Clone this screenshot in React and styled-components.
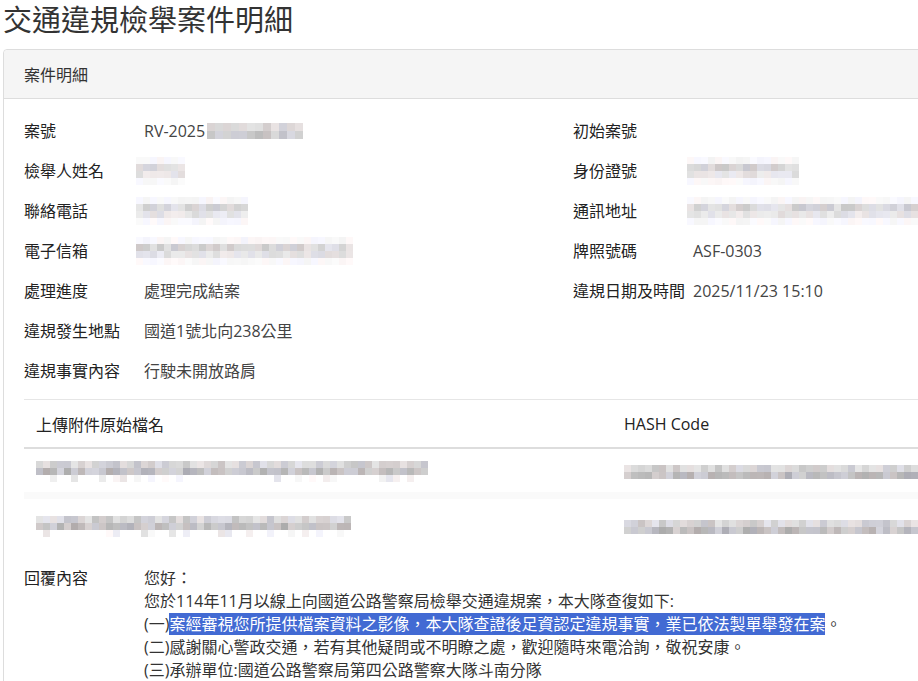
import React from "react";
import styled, { createGlobalStyle } from "styled-components";

const GlobalStyle = createGlobalStyle`
  html, body {
    margin: 0;
    padding: 0;
    background: #fff;
    overflow: hidden;
  }
  body {
    font-family: "Open Sans", "Noto Sans CJK TC", sans-serif;
    color: #333;
    font-size: 16px;
  }
`;

const Page = styled.div`
  padding-left: 3px;
  width: 1160px;
`;

const Title = styled.h1`
  margin: 0 0 13px 0;
  padding-top: 1px;
  font-size: 29px;
  line-height: 35px;
  font-weight: 400;
  color: #333;
  font-family: "Noto Sans CJK TC", sans-serif;
`;

const Panel = styled.section`
  width: 1140px;
  border: 1px solid #ddd;
  border-radius: 4px;
  background: #fff;
`;

const PanelHeading = styled.header`
  height: 48px;
  display: flex;
  align-items: center;
  padding: 0 20px;
  background: #f5f5f5;
  border-bottom: 1px solid #ddd;
  border-radius: 4px 4px 0 0;
  font-size: 16px;
  color: #333;
`;

const PanelBody = styled.div`
  padding: 12px 20px 20px 20px;
`;

const DetailGrid = styled.div`
  display: grid;
  grid-template-columns: 549px 1fr;
`;

const Column = styled.div`
  display: flex;
  flex-direction: column;
`;

const Field = styled.div`
  display: grid;
  grid-template-columns: 120px 1fr;
  align-items: center;
  height: 40px;
`;

const Label = styled.span`
  color: #222;
  line-height: 22px;
`;

const Value = styled.span`
  color: #444;
  line-height: 22px;
  display: flex;
  align-items: center;
  white-space: nowrap;
`;

const Divider = styled.hr`
  margin: 8px 0 0 0;
  border: 0;
  border-top: 1px solid #e6e6e6;
`;

const Table = styled.table`
  width: 100%;
  border-collapse: collapse;
`;

const Th = styled.th`
  text-align: left;
  font-weight: 400;
  color: #222;
  height: 47px;
  padding: 0 12px;
  border-bottom: 2px solid #ddd;
  width: ${(p) => p.$w || "auto"};
`;

const Tr = styled.tr`
  border-top: ${(p) => (p.$band ? "7px solid #fafafa" : "0")};
`;

const Td = styled.td`
  height: ${(p) => p.$h}px;
  padding: 0 12px;
  vertical-align: middle;
`;

const Reply = styled.div`
  display: grid;
  grid-template-columns: 120px 1fr;
  margin-top: 16px;
  line-height: 23px;
`;

const ReplyText = styled.div`
  color: #333;
`;

const Line = styled.div`
  white-space: nowrap;
`;

const Selected = styled.span`
  background: #426ad3;
  color: #fff;
`;

const MosaicWrap = styled.span`
  display: inline-grid;
  grid-auto-rows: ${(p) => p.$cell}px;
  margin-left: ${(p) => p.$ml || 0}px;
  vertical-align: middle;
`;

const MosaicRow = styled.span`
  display: flex;
`;

function rng(seed) {
  let s = seed * 9301 + 49297;
  return () => {
    s = (s * 9301 + 49297) % 233280;
    return s / 233280;
  };
}

function Mosaic({ width, seed, profile, cell = 7, ml }) {
  const r = rng(seed);
  const cols = Math.round(width / cell);
  const rows = profile.map(([lo, hi, sparse]) => {
    const cells = [];
    for (let i = 0; i < cols; i++) {
      if (sparse && r() > sparse) {
        cells.push("transparent");
        continue;
      }
      const v = Math.round(lo + (hi - lo) * r());
      const tint = r();
      const rr = v + (tint > 0.7 ? 6 : 0);
      const bb = v + (tint < 0.3 ? 8 : 0);
      cells.push(`rgb(${Math.min(rr, 255)},${v},${Math.min(bb, 255)})`);
    }
    return cells;
  });
  return (
    <MosaicWrap $cell={cell} $ml={ml}>
      {rows.map((cells, i) => (
        <MosaicRow key={i}>
          {cells.map((c, j) => (
            <span key={j} style={{ width: cell, height: cell, background: c }} />
          ))}
        </MosaicRow>
      ))}
    </MosaicWrap>
  );
}

const softProfile = [
  [243, 250],
  [200, 230],
  [218, 238],
  [244, 251],
];

const tableProfile = [
  [195, 230],
  [172, 212],
  [225, 250, 0.3],
];

const left = [
  ["案號", <>RV-2025<Mosaic width={93} seed={3} cell={8} profile={[[205, 235], [188, 220]]} ml={2} /></>],
  ["檢舉人姓名", <Mosaic width={49} seed={5} profile={softProfile} ml={-8} />],
  ["聯絡電話", <Mosaic width={112} seed={7} profile={softProfile} ml={-8} />],
  ["電子信箱", <Mosaic width={217} seed={11} profile={softProfile} ml={-8} />],
  ["處理進度", "處理完成結案"],
  ["違規發生地點", "國道1號北向238公里"],
  ["違規事實內容", "行駛未開放路肩"],
];

const right = [
  ["初始案號", ""],
  ["身份證號", <Mosaic width={112} seed={13} profile={softProfile} ml={-6} />],
  ["通訊地址", <Mosaic width={231} seed={17} profile={softProfile} ml={-6} />],
  ["牌照號碼", "ASF-0303"],
  ["違規日期及時間", "2025/11/23 15:10"],
];

export default function App() {
  return (
    <Page>
      <GlobalStyle />
      <Title>交通違規檢舉案件明細</Title>
      <Panel>
        <PanelHeading>案件明細</PanelHeading>
        <PanelBody>
          <DetailGrid>
            <Column>
              {left.map(([l, v]) => (
                <Field key={l}>
                  <Label>{l}</Label>
                  <Value>{v}</Value>
                </Field>
              ))}
            </Column>
            <Column>
              {right.map(([l, v]) => (
                <Field key={l}>
                  <Label>{l}</Label>
                  <Value>{v}</Value>
                </Field>
              ))}
            </Column>
          </DetailGrid>
          <Divider />
          <Table>
            <thead>
              <tr>
                <Th $w="564px">上傳附件原始檔名</Th>
                <Th>HASH Code</Th>
              </tr>
            </thead>
            <tbody>
              <Tr>
                <Td $h={43}>
                  <Mosaic width={392} seed={19} profile={tableProfile} />
                </Td>
                <Td $h={43}>
                  <Mosaic width={300} seed={23} profile={tableProfile.slice(0, 2)} />
                </Td>
              </Tr>
              <Tr $band>
                <Td $h={52}>
                  <Mosaic width={315} seed={29} profile={tableProfile} />
                </Td>
                <Td $h={52}>
                  <Mosaic width={300} seed={31} profile={tableProfile.slice(0, 2)} />
                </Td>
              </Tr>
            </tbody>
          </Table>
          <Reply>
            <Label>回覆內容</Label>
            <ReplyText>
              <Line>您好：</Line>
              <Line>您於114年11月以線上向國道公路警察局檢舉交通違規案，本大隊查復如下:</Line>
              <Line>
                (一)<Selected>案經審視您所提供檔案資料之影像，本大隊查證後足資認定違規事實，業已依法製單舉發在案</Selected>。
              </Line>
              <Line>(二)感謝關心警政交通，若有其他疑問或不明瞭之處，歡迎隨時來電洽詢，敬祝安康。</Line>
              <Line>(三)承辦單位:國道公路警察局第四公路警察大隊斗南分隊</Line>
            </ReplyText>
          </Reply>
        </PanelBody>
      </Panel>
    </Page>
  );
}
